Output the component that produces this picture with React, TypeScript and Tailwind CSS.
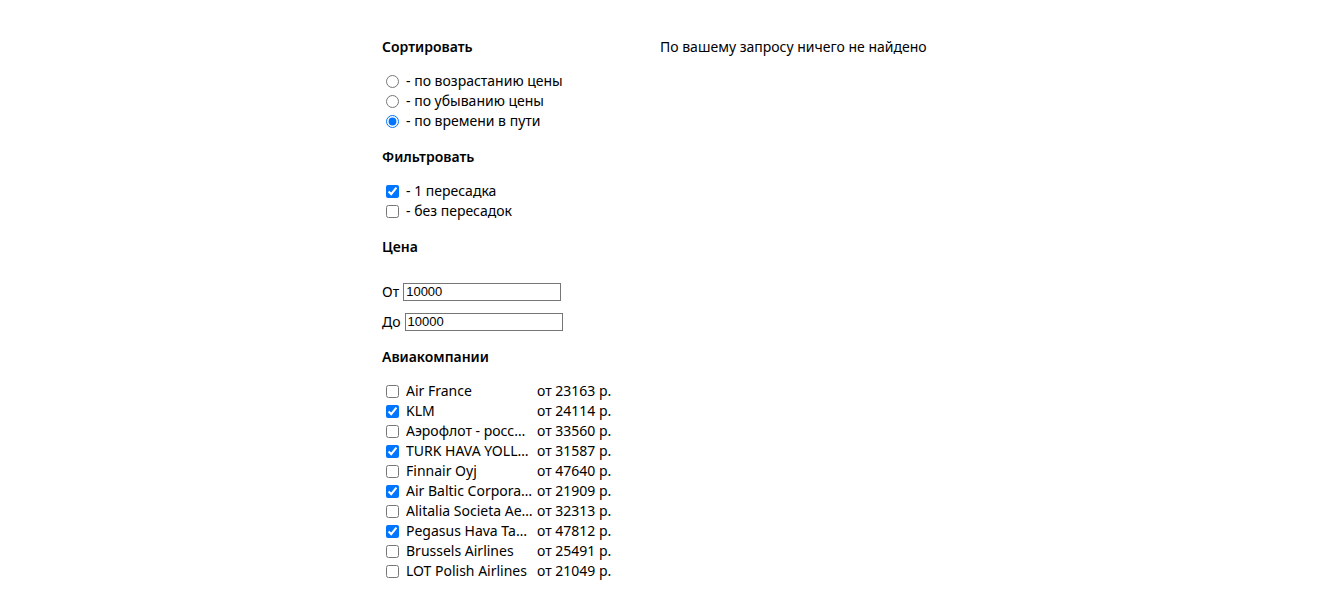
import React from "react";

const airlines: { name: string; price: string; checked: boolean }[] = [
  { name: "Air France", price: "от 23163 р.", checked: false },
  { name: "KLM", price: "от 24114 р.", checked: true },
  { name: "Аэрофлот - российские авиалинии", price: "от 33560 р.", checked: false },
  { name: "TURK HAVA YOLLARI A.O.", price: "от 31587 р.", checked: true },
  { name: "Finnair Oyj", price: "от 47640 р.", checked: false },
  { name: "Air Baltic Corporation A/S", price: "от 21909 р.", checked: true },
  { name: "Alitalia Societa Aerea Italiana", price: "от 32313 р.", checked: false },
  { name: "Pegasus Hava Tasimaciligi A.S.", price: "от 47812 р.", checked: true },
  { name: "Brussels Airlines", price: "от 25491 р.", checked: false },
  { name: "LOT Polish Airlines", price: "от 21049 р.", checked: false },
];

function Heading({ children }: { children: React.ReactNode }) {
  return <div className="h-5 leading-5 font-semibold text-[14px]">{children}</div>;
}

export default function App() {
  return (
    <div
      className="min-h-[600px] bg-white text-black text-[14px]"
      style={{ fontFamily: '"Noto Sans", "Open Sans", sans-serif' }}
    >
      <div className="mx-auto flex w-[558px] pt-[37px]">
        <div className="w-[278px] shrink-0">
          <Heading>Сортировать</Heading>
          <div className="mt-[14px] flex flex-col">
            {[
              ["- по возрастанию цены", false],
              ["- по убыванию цены", false],
              ["- по времени в пути", true],
            ].map(([label, checked], i) => (
              <label key={i} className="flex h-5 items-center">
                <input
                  type="radio"
                  name="sort"
                  defaultChecked={checked as boolean}
                  className="ml-[4px] mr-[7px] h-[13px] w-[13px]"
                />
                <span className="leading-5">{label as string}</span>
              </label>
            ))}
          </div>

          <div className="mt-[16px]">
            <Heading>Фильтровать</Heading>
          </div>
          <div className="mt-[14px] flex flex-col">
            {[
              ["- 1 пересадка", true],
              ["- без пересадок", false],
            ].map(([label, checked], i) => (
              <label key={i} className="flex h-5 items-center">
                <input
                  type="checkbox"
                  defaultChecked={checked as boolean}
                  className="ml-[4px] mr-[7px] h-[13px] w-[13px]"
                />
                <span className="leading-5">{label as string}</span>
              </label>
            ))}
          </div>

          <div className="mt-[16px]">
            <Heading>Цена</Heading>
          </div>
          <div className="mt-[26px] flex h-[18px] items-center">
            <span className="mr-[4px] leading-5">От</span>
            <input
              type="text"
              defaultValue="10000"
              className="h-[18px] w-[158px] border border-[#767676] px-[2px] text-[13px] text-black outline-none"
              style={{ fontFamily: '"Liberation Sans", Arial, sans-serif' }}
            />
          </div>
          <div className="mt-[12px] flex h-[18px] items-center">
            <span className="mr-[4px] leading-5">До</span>
            <input
              type="text"
              defaultValue="10000"
              className="h-[18px] w-[158px] border border-[#767676] px-[2px] text-[13px] text-black outline-none"
              style={{ fontFamily: '"Liberation Sans", Arial, sans-serif' }}
            />
          </div>

          <div className="mt-[16px]">
            <Heading>Авиакомпании</Heading>
          </div>
          <div className="mt-[14px] flex flex-col">
            {airlines.map((a, i) => (
              <label key={i} className="flex h-5 items-center">
                <input
                  type="checkbox"
                  defaultChecked={a.checked}
                  className="ml-[4px] mr-[7px] h-[13px] w-[13px] shrink-0"
                />
                <span className="w-[127px] shrink-0 overflow-hidden text-ellipsis whitespace-nowrap leading-5">
                  {a.name}
                </span>
                <span className="ml-[4px] whitespace-nowrap leading-5">{a.price}</span>
              </label>
            ))}
          </div>
        </div>
        <div className="leading-5">По вашему запросу ничего не найдено</div>
      </div>
    </div>
  );
}
